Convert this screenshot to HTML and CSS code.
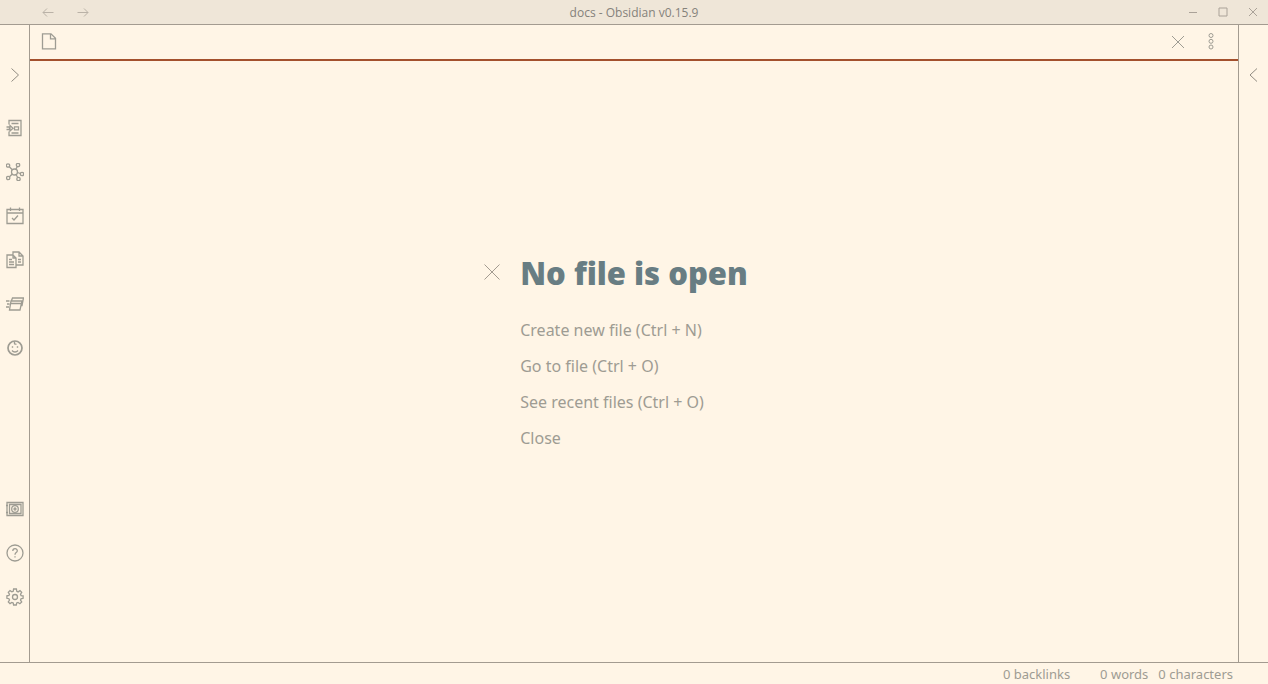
FILE: index.html
```html
<!DOCTYPE html>
<html lang="en">
<head>
<meta charset="utf-8">
<title>docs - Obsidian v0.15.9</title>
<link rel="stylesheet" href="styles.css">
</head>
<body>
<div class="app">
  <header class="titlebar">
    <nav class="titlebar-nav">
      <button class="icon-button" aria-label="Back"><svg width="12" height="12" viewBox="0 0 12 12"><path d="M11.5 6.5H1M5 2.5l-4 4 4 4"/></svg></button>
      <button class="icon-button" aria-label="Forward"><svg width="12" height="12" viewBox="0 0 12 12"><path d="M.5 6.5H11M7 2.5l4 4-4 4"/></svg></button>
    </nav>
    <div class="titlebar-text">docs - Obsidian v0.15.9</div>
    <div class="window-controls">
      <button class="icon-button" aria-label="Minimize"><svg width="10" height="10" viewBox="0 0 10 10"><path d="M1 5.500h8"/></svg></button>
      <button class="icon-button" aria-label="Maximize"><svg width="10" height="10" viewBox="0 0 10 10"><path d="M1 1h8v8H1z"/></svg></button>
      <button class="icon-button" aria-label="Close window"><svg width="10" height="10" viewBox="0 0 10 10"><path d="M1 1l8 8M9 1L1 9"/></svg></button>
    </div>
  </header>
  <div class="workspace">
    <aside class="ribbon ribbon-left">
      <button class="icon-button ribbon-toggle" aria-label="Expand left sidebar"><svg width="18" height="18" viewBox="0 0 18 18"><path d="M5.500 2.500l7 6.500-7 6.500"/></svg></button>
      <div class="ribbon-actions">
        <button class="icon-button" aria-label="Open quick switcher"><svg class="bold" width="18" height="18" viewBox="0 0 18 18"><path d="M3 5.500v-4h12v15H3v-4M5.500 4.500h7M5.500 14h7"/><path d="M.5 8h3v2.500h-3M4 6.500L7 9.200 4 12zM8.500 7.800h4v3h-4z"/></svg></button>
        <button class="icon-button" aria-label="Open graph view"><svg class="bold" width="18" height="18" viewBox="0 0 18 18"><circle cx="8.500" cy="9" r="3"/><circle cx="2" cy="2.500" r="1.700"/><circle cx="12" cy="2" r="1.700"/><circle cx="16" cy="11" r="1.700"/><circle cx="2.200" cy="15" r="1.700"/><circle cx="12.500" cy="16" r="1.700"/><path d="M3.300 3.800l3 3M11.300 3.600L9.800 6.300M11.400 9.500l3 1M6.300 11L3.500 13.800M10 11.500l1.700 3"/></svg></button>
        <button class="icon-button" aria-label="Open today's daily note"><svg class="bold" width="18" height="18" viewBox="0 0 18 18"><path d="M1 2.500h16v14H1zM1 6h16M4.500 .5V4M13.500 .5V4M6 11l2 2L12 8.500"/></svg></button>
        <button class="icon-button" aria-label="Insert template"><svg class="bold" width="18" height="18" viewBox="0 0 18 18"><path d="M7 4H1v12.500h9V7L7 4v3h3M7 3.500V1h6l4 4v9h-6.500M13 1v4h4M3 8.500h3M3 11h5M3 13.500h5M12 8.500h3M12 11h3"/></svg></button>
        <button class="icon-button" aria-label="Open command palette"><svg class="bold" width="18" height="18" viewBox="0 0 18 18"><path d="M5.500 5.500L6.500 3h11l-1.500 7.500h-1M5 6h11l-2 9H3.500zM4.800 8.500h10.200M0 6h3.500M1 9h2.500M0 12h3"/></svg></button>
        <button class="icon-button" aria-label="Open random note"><svg class="bold" width="18" height="18" viewBox="0 0 18 18"><circle class="heavy" cx="9" cy="9" r="7"/><path d="M9 2.500c-1.500 1.500-.3 3.200 1.500 2.500M6 11.500c1.500 2 4.500 2 6 0M5.800 8h1.400M10.800 8h1.400"/></svg></button>
      </div>
      <div class="ribbon-settings">
        <button class="icon-button" aria-label="Open another vault"><svg class="bold" width="18" height="18" viewBox="0 0 18 18"><path d="M1 2.500h16v13H1zM3.500 4.500h11.500v9H3.500zM0 5.500h2M0 12.500h2"/><circle cx="9" cy="9" r="3.300"/><circle cx="9" cy="9" r="1"/></svg></button>
        <button class="icon-button" aria-label="Help"><svg class="bold" width="18" height="18" viewBox="0 0 18 18"><circle cx="9" cy="9" r="8"/><path d="M6.800 7c0-3 4.500-3 4.500-.3 0 2-2.300 1.800-2.300 4M9 12.300v1.200"/></svg></button>
        <button class="icon-button" aria-label="Settings"><svg class="bold" width="18" height="18" viewBox="0 0 18 18"><circle cx="9" cy="9" r="2.500"/><path d="M7.600 1h2.800l.4 2.300 1.300.6L14 2.600 15.700 4.400l-1.200 1.800.6 1.400 2 .3v2.400l-2.100.5-.5 1.300 1.200 1.900-1.800 1.700-1.900-1.200-1.300.5-.4 2H7.600l-.4-2-1.400-.6-1.800 1.200-1.700-1.700 1.200-1.900-.6-1.300-2-.4V7.900l2-.4.6-1.300-1.200-1.800L4 2.600l1.900 1.200 1.300-.5z"/></svg></button>
      </div>
    </aside>
    <main class="pane">
      <div class="view-header">
        <svg class="bold" width="18" height="18" viewBox="0 0 18 18"><path d="M2.500 .8h8.500l4.500 4.500v10.500h-13zM10.500 .8v5h5"/></svg>
        <div class="view-actions">
          <button class="icon-button" aria-label="Close pane"><svg width="16" height="16" viewBox="0 0 16 16"><path d="M2 2l12 12M14 2L2 14"/></svg></button>
          <button class="icon-button" aria-label="More options"><svg width="18" height="18" viewBox="0 0 18 18"><circle cx="9" cy="2.500" r="2"/><circle cx="9" cy="8.300" r="2"/><circle cx="9" cy="14" r="2"/></svg></button>
        </div>
      </div>
      <section class="empty-state">
        <div class="empty-content">
          <h1 class="empty-title"><svg class="empty-mark" width="18" height="18" viewBox="0 0 18 18"><path d="M1.500 1.500l15 15M16.500 1.500l-15 15"/></svg>No file is open</h1>
          <button class="empty-action">Create new file (Ctrl + N)</button>
          <button class="empty-action">Go to file (Ctrl + O)</button>
          <button class="empty-action">See recent files (Ctrl + O)</button>
          <button class="empty-action">Close</button>
        </div>
      </section>
    </main>
    <aside class="ribbon ribbon-right">
      <button class="icon-button ribbon-toggle" aria-label="Expand right sidebar"><svg width="18" height="18" viewBox="0 0 18 18"><path d="M12 2.500L5 9l7 6.500"/></svg></button>
    </aside>
  </div>
  <footer class="status-bar">
    <span class="backlinks">0 backlinks</span>
    <span>0 words</span>
    <span>0 characters</span>
  </footer>
</div>
</body>
</html>
```

FILE: styles.css
```css
* {
  box-sizing: border-box;
}

body {
  margin: 0;
  background: #fff5e6;
  color: #9e9c93;
  font-family: "Noto Sans", "Open Sans", sans-serif;
}

button {
  padding: 0;
  border: 0;
  background: none;
  color: inherit;
  font: inherit;
}

svg {
  display: block;
  flex: none;
  fill: none;
  stroke: currentColor;
  stroke-width: 1;
}

.bold {
  stroke-width: 1.3;
}

.heavy {
  stroke-width: 1.7;
}

.icon-button {
  display: flex;
  align-items: center;
  justify-content: center;
}

.app {
  display: flex;
  flex-direction: column;
  height: 100vh;
}

.titlebar {
  display: grid;
  grid-template-columns: 1fr auto 1fr;
  align-items: center;
  height: 25px;
  border-bottom: 1px solid #a39b90;
  background: #efe6d8;
}

.titlebar-nav {
  display: flex;
  gap: 23px;
  padding-left: 42px;
  color: #bab2a7;
}

.titlebar-text {
  padding-top: 2px;
  color: #85827b;
  font-family: "Open Sans", "Noto Sans", sans-serif;
  font-size: 12px;
  line-height: 22px;
}

.window-controls {
  display: flex;
  justify-content: flex-end;
  gap: 20px;
  padding-right: 10px;
  color: #aaa298;
}

.workspace {
  display: flex;
  flex: 1;
  min-height: 0;
}

.ribbon {
  display: flex;
  flex-direction: column;
  width: 30px;
  padding: 41px 0 56px;
}

.ribbon-left {
  border-right: 1px solid #a39b90;
}

.ribbon-right {
  border-left: 1px solid #a39b90;
}

.ribbon-toggle {
  color: #918c82;
}

.ribbon-actions,
.ribbon-settings {
  display: flex;
  flex-direction: column;
  gap: 26px;
}

.ribbon-actions {
  margin-top: 35px;
}

.ribbon-settings {
  margin-top: auto;
}

.pane {
  display: flex;
  flex: 1;
  flex-direction: column;
}

.view-header {
  display: flex;
  align-items: center;
  justify-content: space-between;
  height: 36px;
  padding: 0 18px 0 10px;
  border-bottom: 2px solid #a3502d;
}

.view-actions {
  display: flex;
  gap: 16px;
}

.empty-state {
  display: flex;
  flex: 1;
  align-items: center;
  justify-content: center;
  padding-bottom: 14px;
}

.empty-content {
  display: flex;
  flex-direction: column;
  align-items: flex-start;
}

.empty-title {
  position: relative;
  margin: 0 0 20px;
  color: #687d83;
  font-family: "Open Sans", "Noto Sans", sans-serif;
  font-size: 31px;
  font-weight: 800;
  line-height: 38px;
}

.empty-mark {
  position: absolute;
  top: 9px;
  right: calc(100% + 19px);
  color: #a39b90;
}

.empty-action {
  font-size: 16px;
  line-height: 36px;
}

.status-bar {
  display: flex;
  justify-content: flex-end;
  gap: 10px;
  padding: 2px 35px 0 0;
  border-top: 1px solid #a39b90;
  font-size: 13px;
  line-height: 19px;
}

.backlinks {
  margin-right: 20px;
}
```
